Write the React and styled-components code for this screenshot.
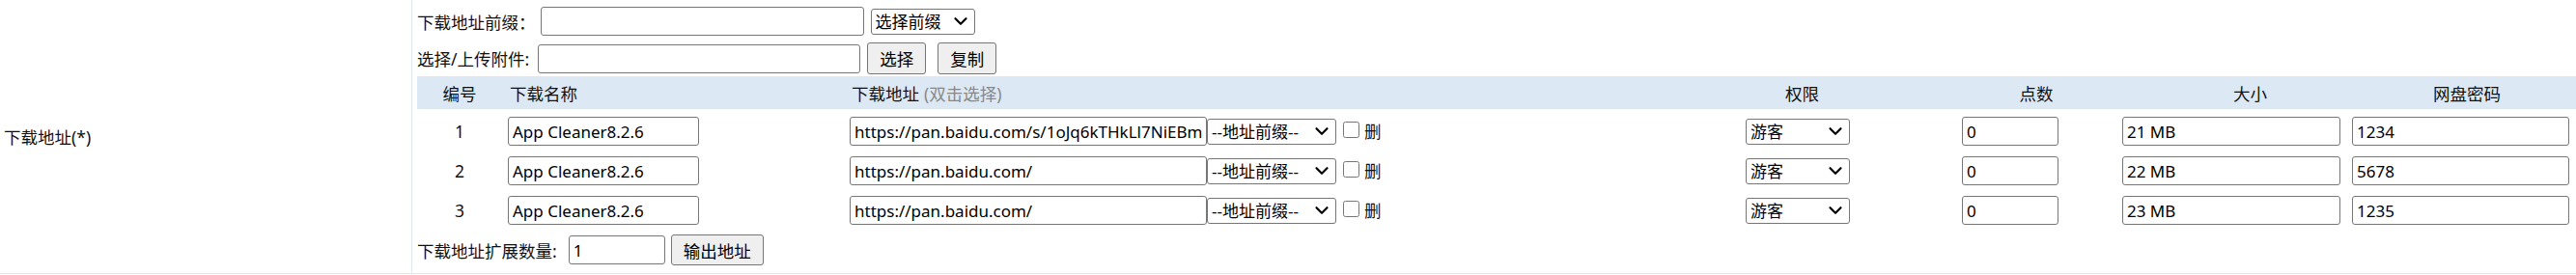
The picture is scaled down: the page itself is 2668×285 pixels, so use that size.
import React from "react"
import styled, { createGlobalStyle } from "styled-components"
import { ChevronDown } from "lucide-react"

const GlobalStyle = createGlobalStyle`
  html, body {
    margin: 0;
    padding: 0;
    background: #fff;
  }
  body {
    font-family: "Noto Sans", "Noto Sans CJK SC", sans-serif;
    font-size: 17.5px;
    color: #111;
  }
`

const FormRow = styled.div`
  display: grid;
  grid-template-columns: 427px 1fr;
  width: 2668px;
  border-bottom: 1px solid #dfe8f1;
`
const LabelCell = styled.div`
  display: flex;
  align-items: center;
  padding-left: 4px;
  border-right: 1px solid #dfe8f1;
`
const FieldCell = styled.div`
  padding: 7px 0 8px 5px;
  min-width: 0;
`
const Line = styled.div`
  display: flex;
  align-items: center;
  height: ${p => p.h || 30}px;
  margin-top: ${p => p.top || 0}px;
  white-space: nowrap;
`
const Label = styled.span`
  margin-right: ${p => p.space || 5}px;
`
const TextInput = styled.input`
  box-sizing: border-box;
  width: ${p => p.w}px;
  height: 30px;
  margin: 0;
  margin-left: ${p => p.gap || 0}px;
  padding: 0 4px;
  border: 1px solid #767676;
  border-radius: 3px;
  background: #fff;
  color: #000;
  font-family: inherit;
  font-size: 17px;
  outline: none;
`
const SelectWrap = styled.span`
  position: relative;
  display: inline-flex;
  margin-left: ${p => p.gap || 0}px;
`
const Select = styled.select`
  box-sizing: border-box;
  appearance: none;
  width: ${p => p.w}px;
  height: 27px;
  margin: 0;
  padding: 0 0 0 4px;
  border: 1px solid #767676;
  border-radius: 3px;
  background: #fff;
  color: #000;
  font-family: inherit;
  font-size: 17px;
  outline: none;
`
const Arrow = styled(ChevronDown)`
  position: absolute;
  right: 4px;
  top: 50%;
  transform: translateY(-50%);
  color: #000;
  pointer-events: none;
`
const Button = styled.button`
  box-sizing: border-box;
  height: ${p => p.h || 33}px;
  margin: 0;
  margin-left: ${p => p.gap || 0}px;
  padding: 0 12px;
  border: 1px solid #767676;
  border-radius: 3px;
  background: #efefef;
  color: #000;
  font-family: inherit;
  font-size: 17.5px;
`
const Table = styled.div`
  display: grid;
  grid-template-columns: 88px 356px 926px 224px 166px 238px 1fr;
  margin-top: 2px;
`
const Head = styled.div`
  display: flex;
  align-items: center;
  justify-content: ${p => (p.center ? "center" : "flex-start")};
  height: 34px;
  padding-left: ${p => p.pad || 0}px;
  background: #dce9f5;
  white-space: nowrap;
`
const Hint = styled.span`
  color: #888;
  margin-left: 5px;
`
const Cell = styled.div`
  display: flex;
  align-items: ${p => (p.baseline ? "baseline" : "center")};
  justify-content: ${p => (p.center ? "center" : "flex-start")};
  height: 30px;
  margin: 8px 0 3px;
  padding-left: ${p => p.pad || 0}px;
  white-space: nowrap;
`
const Check = styled.input.attrs({ type: "checkbox" })`
  width: 17px;
  height: 17px;
  margin: 0 5px 0 7px;
`
const Del = styled.span`
  font-size: 17.5px;
`

const Dropdown = ({ w, gap, value }) => (
  <SelectWrap gap={gap}>
    <Select w={w} defaultValue={value}>
      <option>{value}</option>
    </Select>
    <Arrow size={22} strokeWidth={2.4} />
  </SelectWrap>
)

const rows = [
  { n: 1, name: "App Cleaner8.2.6", url: "https://pan.baidu.com/s/1oJq6kTHkLl7NiEBm", size: "21 MB", pwd: "1234" },
  { n: 2, name: "App Cleaner8.2.6", url: "https://pan.baidu.com/", size: "22 MB", pwd: "5678" },
  { n: 3, name: "App Cleaner8.2.6", url: "https://pan.baidu.com/", size: "23 MB", pwd: "1235" },
]

const App = () => {
  return (
    <>
      <GlobalStyle />
      <FormRow>
        <LabelCell>下载地址(*)</LabelCell>
        <FieldCell>
          <Line>
            <Label>下载地址前缀：</Label>
            <TextInput w={335} defaultValue="" />
            <Dropdown w={108} gap={7} value="选择前缀" />
          </Line>
          <Line top={7} h={33}>
            <Label space={9}>选择/上传附件:</Label>
            <TextInput w={334} defaultValue="" />
            <Button gap={7}>选择</Button>
            <Button gap={12}>复制</Button>
          </Line>
          <Table>
            <Head center>编号</Head>
            <Head pad={8}>下载名称</Head>
            <Head pad={6}>
              下载地址<Hint>(双击选择)</Hint>
            </Head>
            <Head pad={47}>权限</Head>
            <Head center>点数</Head>
            <Head pad={121}>大小</Head>
            <Head pad={90}>网盘密码</Head>
            {rows.map(r => (
              <React.Fragment key={r.n}>
                <Cell center>{r.n}</Cell>
                <Cell pad={6}>
                  <TextInput w={198} defaultValue={r.name} />
                </Cell>
                <Cell pad={4} baseline>
                  <TextInput w={370} defaultValue={r.url} />
                  <Dropdown w={134} value="--地址前缀--" />
                  <Check />
                  <Del>删</Del>
                </Cell>
                <Cell pad={6}>
                  <Dropdown w={108} value="游客" />
                </Cell>
                <Cell pad={6}>
                  <TextInput w={100} defaultValue="0" />
                </Cell>
                <Cell pad={6}>
                  <TextInput w={226} defaultValue={r.size} />
                </Cell>
                <Cell pad={6}>
                  <TextInput w={225} defaultValue={r.pwd} />
                </Cell>
              </React.Fragment>
            ))}
          </Table>
          <Line top={7} h={32}>
            <Label space={12}>下载地址扩展数量:</Label>
            <TextInput w={100} defaultValue="1" />
            <Button gap={6} h={32}>输出地址</Button>
          </Line>
        </FieldCell>
      </FormRow>
    </>
  )
}

export default App
